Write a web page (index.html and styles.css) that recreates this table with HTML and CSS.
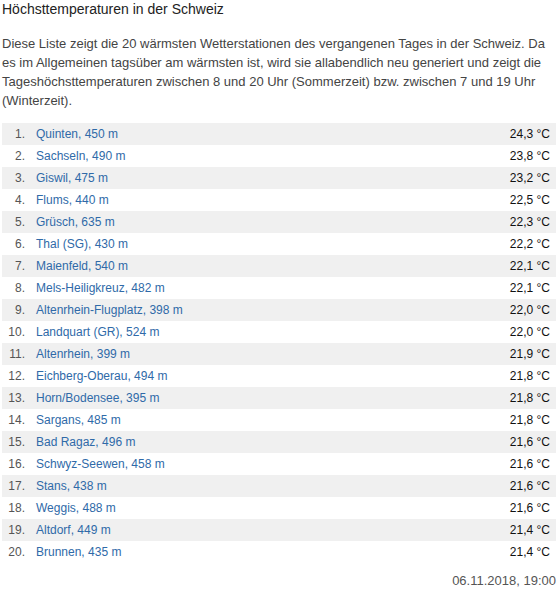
FILE: index.html
```html
<!DOCTYPE html>
<html lang="de">
<head>
<meta charset="utf-8">
<link rel="stylesheet" href="styles.css">
</head>
<body>
<div class="box">
  <h2 class="title">Höchsttemperaturen in der Schweiz</h2>
  <p class="intro">Diese Liste zeigt die 20 wärmsten Wetterstationen des vergangenen Tages in der Schweiz. Da es im Allgemeinen tagsüber am wärmsten ist, wird sie allabendlich neu generiert und zeigt die Tageshöchsttemperaturen zwischen 8 und 20 Uhr (Sommerzeit) bzw. zwischen 7 und 19 Uhr (Winterzeit).</p>
  <table class="list">
    <tr><td class="rank">1.</td><td class="station">Quinten, 450 m</td><td class="temp">24,3 °C</td></tr>
    <tr><td class="rank">2.</td><td class="station">Sachseln, 490 m</td><td class="temp">23,8 °C</td></tr>
    <tr><td class="rank">3.</td><td class="station">Giswil, 475 m</td><td class="temp">23,2 °C</td></tr>
    <tr><td class="rank">4.</td><td class="station">Flums, 440 m</td><td class="temp">22,5 °C</td></tr>
    <tr><td class="rank">5.</td><td class="station">Grüsch, 635 m</td><td class="temp">22,3 °C</td></tr>
    <tr><td class="rank">6.</td><td class="station">Thal (SG), 430 m</td><td class="temp">22,2 °C</td></tr>
    <tr><td class="rank">7.</td><td class="station">Maienfeld, 540 m</td><td class="temp">22,1 °C</td></tr>
    <tr><td class="rank">8.</td><td class="station">Mels-Heiligkreuz, 482 m</td><td class="temp">22,1 °C</td></tr>
    <tr><td class="rank">9.</td><td class="station">Altenrhein-Flugplatz, 398 m</td><td class="temp">22,0 °C</td></tr>
    <tr><td class="rank">10.</td><td class="station">Landquart (GR), 524 m</td><td class="temp">22,0 °C</td></tr>
    <tr><td class="rank">11.</td><td class="station">Altenrhein, 399 m</td><td class="temp">21,9 °C</td></tr>
    <tr><td class="rank">12.</td><td class="station">Eichberg-Oberau, 494 m</td><td class="temp">21,8 °C</td></tr>
    <tr><td class="rank">13.</td><td class="station">Horn/Bodensee, 395 m</td><td class="temp">21,8 °C</td></tr>
    <tr><td class="rank">14.</td><td class="station">Sargans, 485 m</td><td class="temp">21,8 °C</td></tr>
    <tr><td class="rank">15.</td><td class="station">Bad Ragaz, 496 m</td><td class="temp">21,6 °C</td></tr>
    <tr><td class="rank">16.</td><td class="station">Schwyz-Seewen, 458 m</td><td class="temp">21,6 °C</td></tr>
    <tr><td class="rank">17.</td><td class="station">Stans, 438 m</td><td class="temp">21,6 °C</td></tr>
    <tr><td class="rank">18.</td><td class="station">Weggis, 488 m</td><td class="temp">21,6 °C</td></tr>
    <tr><td class="rank">19.</td><td class="station">Altdorf, 449 m</td><td class="temp">21,4 °C</td></tr>
    <tr><td class="rank">20.</td><td class="station">Brunnen, 435 m</td><td class="temp">21,4 °C</td></tr>
  </table>
  <div class="stamp">06.11.2018, 19:00</div>
</div>
</body>
</html>
```
FILE: styles.css
```css
html, body {
  margin: 0;
  padding: 0;
  background: #fff;
}
body {
  font-family: "Liberation Sans", Arial, sans-serif;
  color: #444;
}
.box {
  padding: 0 2px;
}
.title {
  margin: 0;
  font-size: 14px;
  font-weight: normal;
  line-height: 18px;
  color: #222;
}
.intro {
  margin: 16px 0 13px;
  font-size: 13px;
  line-height: 19px;
  color: #444;
}
.list {
  width: 100%;
  border-collapse: collapse;
  font-size: 12px;
}
.list tr:nth-child(odd) td {
  background: #f0f0f0;
}
.list td {
  height: 22px;
  padding: 0;
  vertical-align: middle;
}
.rank {
  width: 23px;
  text-align: right;
  color: #555;
}
.station {
  padding-left: 11px !important;
  color: #2f6aa8;
}
.temp {
  text-align: right;
  padding-right: 6px !important;
  color: #111;
}
.stamp {
  margin-top: 10px;
  text-align: right;
  padding-right: 0;
  font-size: 13px;
  line-height: 15px;
  color: #555;
}
```
